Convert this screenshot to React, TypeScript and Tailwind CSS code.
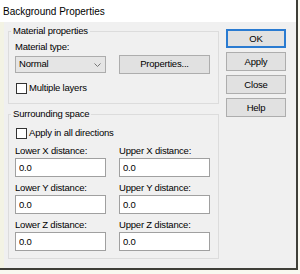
import React from "react";

const font = { fontFamily: '"Liberation Sans", Arial, sans-serif' };

function Field({ label, value }: { label: string; value: string }) {
  return (
    <div className="flex flex-col w-[91px]">
      <span className="h-[12px] leading-[12px]">{label}</span>
      <input
        readOnly
        value={value}
        className="mt-[1px] h-[19px] w-[91px] border border-[#a0a0a0] bg-white px-[3px] text-[9.5px] text-black outline-none"
      />
    </div>
  );
}

function Check({ label }: { label: string }) {
  return (
    <label className="flex items-center gap-[2px] h-[13px]">
      <span className="block w-[11px] h-[11px] border border-[#333] bg-white" />
      <span>{label}</span>
    </label>
  );
}

function Btn({ label, primary }: { label: string; primary?: boolean }) {
  return (
    <button
      className={`w-[60px] h-[19px] bg-[#e1e1e1] text-[9.5px] tracking-[-0.2px] text-black leading-none ${
        primary ? "border-2 border-[#2a7bd1]" : "border border-[#adadad]"
      }`}
    >
      {label}
    </button>
  );
}

export default function App() {
  return (
    <div className="w-[300px] h-[274px] bg-[#f9f9f0]" style={font}>
      <div className="w-[298px] h-[270px] flex flex-col border-r-2 border-b-2 border-[#3f3f38] bg-[#f0f0f0] text-[9.5px] tracking-[-0.2px] text-black">
        <div className="h-[22px] bg-white pl-[3px] flex items-center text-[10px] tracking-normal">
          Background Properties
        </div>
        <div className="flex-1 flex border-l-[4px] border-[#f3f3e4]">
          <div className="w-[215px] pl-[4px] pt-[2px] flex flex-col">
            <fieldset className="border border-[#dcdcdc] h-[80px] px-[6px]">
              <legend className="-ml-[4px] px-[2px] leading-[14px]">Material properties</legend>
              <div className="leading-[12px] mt-[3px]">Material type:</div>
              <div className="flex items-center gap-[13px] mt-[2px] h-[19px]">
                <div className="w-[91px] h-[17px] border border-[#acacac] bg-[#e5e5e5] flex items-center justify-between pl-[3px] pr-[4px]">
                  <span>Normal</span>
                  <svg width="7" height="4" viewBox="0 0 7 4">
                    <path d="M0.5 0.5 L3.5 3.5 L6.5 0.5" fill="none" stroke="#777" strokeWidth="1" />
                  </svg>
                </div>
                <div className="w-[91px] h-[19px] border border-[#adadad] bg-[#e1e1e1] flex items-center justify-center">
                  Properties...
                </div>
              </div>
              <div className="mt-[8px] ml-[1px]">
                <Check label="Multiple layers" />
              </div>
            </fieldset>
            <fieldset className="mt-[3px] border border-[#dcdcdc] h-[152px] px-[6px]">
              <legend className="-ml-[4px] px-[2px] leading-[14px]">Surrounding space</legend>
              <div className="mt-[6px] ml-[1px]">
                <Check label="Apply in all directions" />
              </div>
              <div className="mt-[5px] grid grid-cols-[91px_91px] gap-x-[13px] gap-y-[5px]">
                <Field label="Lower X distance:" value="0.0" />
                <Field label="Upper X distance:" value="0.0" />
                <Field label="Lower Y distance:" value="0.0" />
                <Field label="Upper Y distance:" value="0.0" />
                <Field label="Lower Z distance:" value="0.0" />
                <Field label="Upper Z distance:" value="0.0" />
              </div>
            </fieldset>
          </div>
          <div className="pl-[7px] pt-[7px] flex flex-col gap-[4px]">
            <Btn label="OK" primary />
            <Btn label="Apply" />
            <Btn label="Close" />
            <Btn label="Help" />
          </div>
        </div>
      </div>
    </div>
  );
}
